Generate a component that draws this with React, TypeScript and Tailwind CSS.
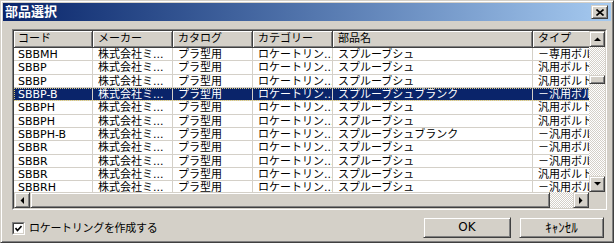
import React from 'react';

const FONT = { fontFamily: '"DejaVu Sans", "Noto Sans CJK JP", sans-serif' };

// classic 3D bevel pieces
const raised =
  'bg-[#d4d0c8] border border-t-[#d4d0c8] border-l-[#d4d0c8] border-r-[#404040] border-b-[#404040] shadow-[inset_1px_1px_0_#ffffff,inset_-1px_-1px_0_#808080]';
const checker =
  'bg-[repeating-conic-gradient(#d4d0c8_0%_25%,#ffffff_0%_50%)] bg-[length:2px_2px]';

const cols = [
  { label: 'コード', w: 'w-[79px]', pad: 'pl-[4px]' },
  { label: 'メーカー', w: 'w-[80px]', pad: 'pl-[5px]' },
  { label: 'カタログ', w: 'w-[80px]', pad: 'pl-[5px]' },
  { label: 'カテゴリー', w: 'w-[80px]', pad: 'pl-[5px]' },
  { label: '部品名', w: 'w-[200px]', pad: 'pl-[5px]' },
  { label: 'タイプ', w: 'w-[110px]', pad: 'pl-[5px]' },
];

const rows = [
  { code: 'SBBMH', name: 'スプルーブシュ', type: '－専用ボルト', h: 'h-[13px]' },
  { code: 'SBBP', name: 'スプルーブシュ', type: '汎用ボルト', h: 'h-[14px]' },
  { code: 'SBBP', name: 'スプルーブシュ', type: '汎用ボルト', h: 'h-[13px]' },
  { code: 'SBBP-B', name: 'スプルーブシュブランク', type: '－汎用ボルト', h: 'h-[13px]', sel: true },
  { code: 'SBBPH', name: 'スプルーブシュ', type: '汎用ボルト', h: 'h-[14px]' },
  { code: 'SBBPH', name: 'スプルーブシュ', type: '汎用ボルト', h: 'h-[13px]' },
  { code: 'SBBPH-B', name: 'スプルーブシュブランク', type: '－汎用ボルト', h: 'h-[13px]' },
  { code: 'SBBR', name: 'スプルーブシュ', type: '－汎用ボルト', h: 'h-[14px]' },
  { code: 'SBBR', name: 'スプルーブシュ', type: '－汎用ボルト', h: 'h-[13px]' },
  { code: 'SBBR', name: 'スプルーブシュ', type: '汎用ボルト', h: 'h-[13px]' },
  { code: 'SBBRH', name: 'スプルーブシュ', type: '－汎用ボルト', h: 'h-[14px]' },
];

const Arrow = ({ dir }: { dir: 'up' | 'down' | 'left' | 'right' }) => {
  const pts = {
    up: '0,4 7,4 3.5,0.5',
    down: '0,0 7,0 3.5,3.5',
    left: '4,0 4,7 0.5,3.5',
    right: '0,0 0,7 3.5,3.5',
  }[dir];
  const vertical = dir === 'up' || dir === 'down';
  return (
    <svg width={vertical ? 7 : 4} height={vertical ? 4 : 7} viewBox={vertical ? '0 0 7 4' : '0 0 4 7'}>
      <polygon points={pts} fill="#000" />
    </svg>
  );
};

const ScrollBtn = ({ dir }: { dir: 'up' | 'down' | 'left' | 'right' }) => (
  <div className={`${raised} w-[16px] h-[16px] shrink-0 flex items-center justify-center`}>
    <Arrow dir={dir} />
  </div>
);

export default function App() {
  return (
    <div
      style={FONT}
      className="w-[614px] h-[243px] bg-[#d4d0c8] border border-t-[#d4d0c8] border-l-[#d4d0c8] border-r-[#404040] border-b-[#404040] shadow-[inset_1px_1px_0_#ffffff,inset_-1px_-1px_0_#808080] p-[2px] flex flex-col overflow-hidden"
    >
      {/* title bar */}
      <div className="h-[18px] shrink-0 flex items-center justify-between bg-gradient-to-r from-[#0a246a] to-[#a6caf0]">
        <span className="pl-[2px] text-[13px] font-bold text-white leading-[18px]">部品選択</span>
        <div className={`${raised} w-[17px] h-[14px] mr-[3px] flex items-center justify-center`}>
          <svg width="8" height="7" viewBox="0 0 8 7">
            <path d="M0.5 0.5 L7.5 6.5 M7.5 0.5 L0.5 6.5" stroke="#000" strokeWidth="1.6" />
          </svg>
        </div>
      </div>

      <div className="flex-1 flex flex-col pt-[8px] pl-[9px] pr-[4px]">
        {/* list view */}
        <div className="w-[595px] h-[181px] border border-t-[#808080] border-l-[#808080] border-r-white border-b-white">
          <div className="w-full h-full border border-t-[#404040] border-l-[#404040] border-r-[#d4d0c8] border-b-[#d4d0c8] flex">
            <div className="flex-1 flex flex-col min-w-0">
              <div className="h-[161px] overflow-hidden bg-white">
                {/* header */}
                <div className="flex h-[17px] w-max">
                  {cols.map((c) => (
                    <div
                      key={c.label}
                      className={`${c.w} ${c.pad} shrink-0 h-[17px] bg-[#d4d0c8] border-r border-b border-[#404040] shadow-[inset_1px_1px_0_#ffffff,inset_-1px_-1px_0_#808080] text-[11px] leading-[16px] text-black whitespace-nowrap overflow-hidden`}
                    >
                      {c.label}
                    </div>
                  ))}
                </div>
                {/* rows */}
                {rows.map((r, i) => {
                  const cells = [r.code, '株式会社ミ...', 'プラ型用', 'ロケートリン...', r.name, r.type];
                  return (
                    <div
                      key={i}
                      className={`flex w-max ${r.h} border-b border-[#d4d0c8] ${
                        r.sel ? 'bg-[#0a246a] text-white outline-1 outline-dotted outline-[#d8c878] -outline-offset-1' : 'text-black'
                      }`}
                    >
                      {cells.map((t, j) => (
                        <div
                          key={j}
                          className={`${cols[j].w} ${cols[j].pad} shrink-0 h-full border-r border-[#d4d0c8] text-[11px] leading-[13px] whitespace-nowrap overflow-hidden`}
                        >
                          {t}
                        </div>
                      ))}
                    </div>
                  );
                })}
              </div>
              {/* horizontal scrollbar */}
              <div className="h-[16px] flex">
                <ScrollBtn dir="left" />
                <div className={`${raised} w-[520px] h-[16px] shrink-0`} />
                <div className={`flex-1 h-[16px] ${checker}`} />
                <ScrollBtn dir="right" />
              </div>
            </div>
            {/* vertical scrollbar */}
            <div className="w-[16px] flex flex-col">
              <div className="h-[161px] flex flex-col">
                <ScrollBtn dir="up" />
                <div className={`h-[28px] ${checker}`} />
                <div className={`${raised} h-[9px] shrink-0`} />
                <div className={`flex-1 ${checker}`} />
                <ScrollBtn dir="down" />
              </div>
              <div className="h-[16px] bg-[#d4d0c8]" />
            </div>
          </div>
        </div>

        {/* bottom row */}
        <div className="mt-[7px] flex items-center justify-between">
          <label className="flex items-center gap-[4px] mt-[2px]">
            <span className="w-[13px] h-[13px] bg-white border border-t-[#808080] border-l-[#808080] border-r-white border-b-white flex">
              <span className="flex-1 border border-t-[#404040] border-l-[#404040] border-r-[#d4d0c8] border-b-[#d4d0c8] flex items-center justify-center">
                <svg width="7" height="7" viewBox="0 0 7 7">
                  <path d="M0.5 3 L2.5 5.5 L6.5 1" stroke="#000" strokeWidth="1.6" fill="none" />
                </svg>
              </span>
            </span>
            <span className="text-[11px] tracking-[-0.3px] leading-[14px] text-black">ロケートリングを作成する</span>
          </label>
          <div className="flex gap-[8px] mr-[3px]">
            <button className={`${raised} w-[88px] h-[21px] text-[12px] leading-[17px] text-black`}>OK</button>
            <button className={`${raised} w-[85px] h-[21px] text-[13px] leading-[17px] text-black`}>ｷｬﾝｾﾙ</button>
          </div>
        </div>
      </div>
    </div>
  );
}
